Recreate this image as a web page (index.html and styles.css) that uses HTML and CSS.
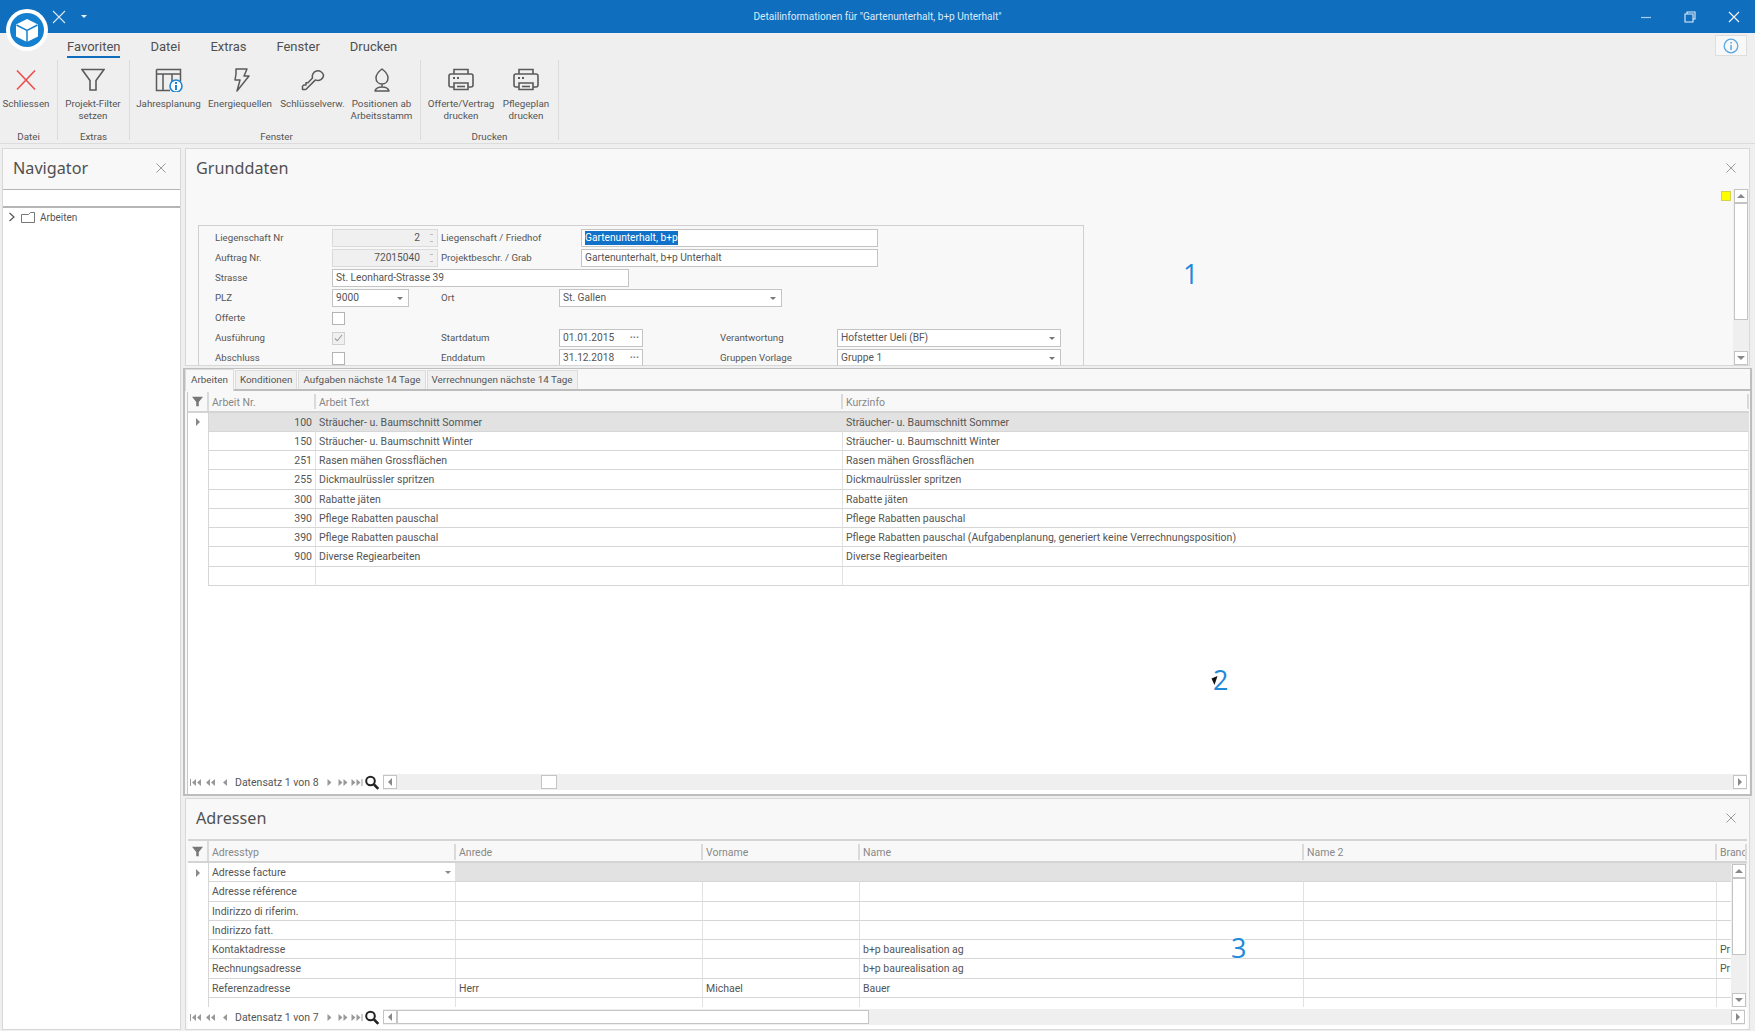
FILE: index.html
```html
<!DOCTYPE html>
<html lang="de">
<head>
  <meta charset="UTF-8" />
  <title>Detailinformationen</title>
  <link rel="stylesheet" href="styles.css">
</head>
<body>
  <svg class="defs" width="0" height="0">
    <symbol id="i-first" viewBox="0 0 11 7"><rect x="0" y="0" width="1" height="7"/><path d="M6 0v7L2 3.500zM11 0v7L7 3.500z"/></symbol>
    <symbol id="i-prevp" viewBox="0 0 11 7"><path d="M5 0v7L1 3.500zM10 0v7L6 3.500z"/></symbol>
    <symbol id="i-prev" viewBox="0 0 11 7"><path d="M7 0v7L3 3.500z"/></symbol>
    <symbol id="i-next" viewBox="0 0 11 7"><path d="M4 0v7l4-3.500z"/></symbol>
    <symbol id="i-nextp" viewBox="0 0 11 7"><path d="M1 0v7l4-3.500zM6 0v7l4-3.500z"/></symbol>
    <symbol id="i-last" viewBox="0 0 11 7"><path d="M0 0v7l4-3.500zM5 0v7l4-3.500z"/><rect x="10" y="0" width="1" height="7"/></symbol>
    <symbol id="i-close" viewBox="0 0 10 10"><path d="M.5.5l9 9M9.500.5l-9 9" fill="none" stroke="currentColor"/></symbol>
    <symbol id="i-printer" viewBox="0 0 26 24"><g fill="none" stroke="#5a5a5a" stroke-width="1.600"><path d="M6 6V1.500h14V6"/><rect x="1" y="6" width="24" height="13" rx="2"/><path d="M6 15h14v6.500H6z" fill="#efefef"/><path d="M9 18.500h8"/></g><path d="M5 9h2v2H5zM9 9h2v2H9z" fill="#5a5a5a"/></symbol>
    <symbol id="i-funnel" viewBox="0 0 13 13"><path d="M0 1h13L8 7v5H5V7z"/></symbol>
    <symbol id="i-search" viewBox="0 0 15 15"><circle cx="6" cy="6" r="4.300" fill="none" stroke="#222" stroke-width="2"/><path d="M9.500 9.500l4.300 4.300" stroke="#222" stroke-width="2.600"/></symbol>
  </svg>

  <div class="app">
    <!-- Titelleiste -->
    <header class="titlebar">
      <div class="qat">
        <svg class="qat-x" width="14" height="14" viewBox="0 0 14 14"><path d="M1 1l12 12M13 1L1 13" fill="none" stroke="#dbe9f6" stroke-width="1.100"/></svg>
        <span class="qat-arrow"></span>
      </div>
      <div class="title">Detailinformationen für "Gartenunterhalt, b+p Unterhalt"</div>
      <div class="winbtns">
        <svg width="12" height="12" viewBox="0 0 12 12"><path d="M1 6.500h10" stroke="#a9cdea" stroke-width="1.200"/></svg>
        <svg width="12" height="12" viewBox="0 0 12 12"><path d="M3 3V1h8v7H9M1 3h8v8H1z" fill="none" stroke="#e4eff9" stroke-width="1.100"/></svg>
        <svg width="12" height="12" viewBox="0 0 12 12"><path d="M1 1l10 10M11 1L1 11" fill="none" stroke="#f0f6fb" stroke-width="1.200"/></svg>
      </div>
    </header>

    <div class="logo">
      <svg width="34" height="34" viewBox="0 0 34 34">
        <circle cx="17" cy="17" r="17" fill="#1480cf"/>
        <path d="M17 6l11 5.500v12L17 29 6 23.500v-12z" fill="#fff"/>
        <path d="M6.500 12L17 17.300 27.500 12M17 17.300V29" fill="none" stroke="#1480cf" stroke-width="1.500"/>
      </svg>
    </div>

    <!-- Ribbon -->
    <section class="ribbon">
      <nav class="ribbon-tabs">
        <span class="ribbon-tab active">Favoriten</span>
        <span class="ribbon-tab">Datei</span>
        <span class="ribbon-tab">Extras</span>
        <span class="ribbon-tab">Fenster</span>
        <span class="ribbon-tab">Drucken</span>
        <button class="info-btn">
          <svg width="16" height="16" viewBox="0 0 16 16"><circle cx="8" cy="8" r="6.800" fill="none" stroke="#5aa9e2" stroke-width="1.300"/><rect x="7.300" y="7" width="1.500" height="5" fill="#5aa9e2"/><rect x="7.300" y="4" width="1.500" height="1.600" fill="#5aa9e2"/></svg>
        </button>
      </nav>
      <div class="ribbon-groups">
        <div class="rgroup g-datei">
          <div class="rbuttons">
            <div class="rbtn w-52">
              <svg class="ricon" width="24" height="24" viewBox="0 0 24 24"><path d="M3 2.500l18 19M21 2.500l-18 19" fill="none" stroke="#ee4d4d" stroke-width="1.600"/></svg>
              <span>Schliessen</span>
            </div>
          </div>
          <div class="rlabel">Datei</div>
        </div>
        <div class="rgroup g-extras">
          <div class="rbuttons">
            <div class="rbtn w-70">
              <svg class="ricon" width="24" height="24" viewBox="0 0 24 24"><path d="M1 1.500h22l-8 11v9.500H9v-9.500z" fill="none" stroke="#5a5a5a" stroke-width="1.600"/></svg>
              <span>Projekt-Filter<br>setzen</span>
            </div>
          </div>
          <div class="rlabel">Extras</div>
        </div>
        <div class="rgroup g-fenster">
          <div class="rbuttons">
            <div class="rbtn w-71">
              <svg class="ricon" width="28" height="24" viewBox="0 0 28 24"><g fill="none" stroke="#5a5a5a" stroke-width="1.500"><path d="M1.500 1.500h24V13M15 22.500H1.500v-21M1.500 6h24M8 6v16.500M17 6v8"/></g><circle cx="21" cy="18" r="6" fill="#fff" stroke="#1d87d5" stroke-width="1.600"/><path d="M20 17h2v5h-2zM20 14h2v2h-2z" fill="#1d87d5"/></svg>
              <span>Jahresplanung</span>
            </div>
            <div class="rbtn w-72">
              <svg class="ricon" width="24" height="24" viewBox="0 0 24 24"><path d="M8 1h11l-3 7h5L9 23l3-11H7l1-6z" fill="none" stroke="#5a5a5a" stroke-width="1.500" stroke-linejoin="round"/></svg>
              <span>Energiequellen</span>
            </div>
            <div class="rbtn w-73">
              <svg class="ricon" width="26" height="24" viewBox="0 0 26 24"><path d="M23.500 7a5.500 5.500 0 0 1-8 4.900L5.800 21.500H2.500v-3.300l1.300-1.200h2.200v-2.200l2-.1L12.500 10a5.500 5.500 0 1 1 11-3z" fill="none" stroke="#5a5a5a" stroke-width="1.500" stroke-linejoin="round"/></svg>
              <span>Schlüsselverw.</span>
            </div>
            <div class="rbtn w-65">
              <svg class="ricon" width="24" height="24" viewBox="0 0 24 24"><path d="M12 1c-4 3-6 6-6 9 0 3.500 2.500 6 6 6s6-2.500 6-6c0-3-2-6-6-9zM12 16v3M5 23c1-3.500 4-4 7-4s6 .5 7 4z" fill="none" stroke="#5a5a5a" stroke-width="1.500" stroke-linejoin="round"/></svg>
              <span>Positionen ab<br>Arbeitsstamm</span>
            </div>
          </div>
          <div class="rlabel">Fenster</div>
        </div>
        <div class="rgroup g-drucken">
          <div class="rbuttons">
            <div class="rbtn w-80">
              <svg class="ricon" width="26" height="24"><use href="#i-printer"/></svg>
              <span>Offerte/Vertrag<br>drucken</span>
            </div>
            <div class="rbtn w-50">
              <svg class="ricon" width="26" height="24"><use href="#i-printer"/></svg>
              <span>Pflegeplan<br>drucken</span>
            </div>
          </div>
          <div class="rlabel">Drucken</div>
        </div>
      </div>
    </section>

    <div class="workspace">
      <!-- Navigator -->
      <aside class="navigator">
        <div class="panel-head">
          <h2>Navigator</h2>
          <svg class="panel-close" width="10" height="10"><use href="#i-close"/></svg>
        </div>
        <div class="nav-search"></div>
        <div class="tree-row">
          <svg width="8" height="10" viewBox="0 0 8 10"><path d="M1.500 1L6 5 1.500 9" fill="none" stroke="#555" stroke-width="1.200"/></svg>
          <svg width="14" height="11" viewBox="0 0 14 11"><path d="M.5 2.500h7l2-2h4v10H.5z" fill="none" stroke="#777"/></svg>
          <span>Arbeiten</span>
        </div>
      </aside>

      <main class="main">
        <!-- Grunddaten -->
        <section class="panel grunddaten">
          <div class="panel-head">
            <h2>Grunddaten</h2>
            <svg class="panel-close" width="10" height="10"><use href="#i-close"/></svg>
          </div>
          <span class="yellow-mark"></span>
          <div class="panel-body">
            <div class="form-scroll">
              <div class="form-frame">
                <div class="form-row">
                  <label>Liegenschaft Nr</label>
                  <div class="field spin"><span>2</span><i class="spin-arrows"></i></div>
                  <label>Liegenschaft / Friedhof</label>
                  <div class="field name-field"><span class="selected">Gartenunterhalt, b+p</span></div>
                </div>
                <div class="form-row">
                  <label>Auftrag Nr.</label>
                  <div class="field spin"><span>72015040</span><i class="spin-arrows"></i></div>
                  <label>Projektbeschr. / Grab</label>
                  <div class="field name-field"><span>Gartenunterhalt, b+p Unterhalt</span></div>
                </div>
                <div class="form-row">
                  <label>Strasse</label>
                  <div class="field street"><span>St. Leonhard-Strasse 39</span></div>
                </div>
                <div class="form-row">
                  <label>PLZ</label>
                  <div class="field combo plz"><span>9000</span></div>
                  <label>Ort</label>
                  <div class="field combo city"><span>St. Gallen</span></div>
                </div>
                <div class="form-row">
                  <label>Offerte</label>
                  <span class="check"></span>
                </div>
                <div class="form-row">
                  <label>Ausführung</label>
                  <span class="check checked">
                    <svg width="9" height="8" viewBox="0 0 9 8"><path d="M1 4.500l2.300 2.300L8 1" fill="none" stroke="#999" stroke-width="1.100"/></svg>
                  </span>
                  <label>Startdatum</label>
                  <div class="field date"><span>01.01.2015</span><b>···</b></div>
                  <label>Verantwortung</label>
                  <div class="field combo person"><span>Hofstetter Ueli (BF)</span></div>
                </div>
                <div class="form-row">
                  <label>Abschluss</label>
                  <span class="check"></span>
                  <label>Enddatum</label>
                  <div class="field date"><span>31.12.2018</span><b>···</b></div>
                  <label>Gruppen Vorlage</label>
                  <div class="field combo person"><span>Gruppe 1</span></div>
                </div>
              </div>
            </div>
            <div class="vscroll">
              <div class="sb-btn"><i class="tri up"></i></div>
              <div class="sb-thumb form-thumb"></div>
              <div class="sb-track"></div>
              <div class="sb-btn"><i class="tri down"></i></div>
            </div>
          </div>
        </section>

        <!-- Arbeiten -->
        <section class="panel work">
          <div class="tabstrip">
            <span class="tab active">Arbeiten</span>
            <span class="tab">Konditionen</span>
            <span class="tab">Aufgaben nächste 14 Tage</span>
            <span class="tab">Verrechnungen nächste 14 Tage</span>
          </div>
          <div class="grid work-grid">
            <div class="grow ghead">
              <div class="cell ind"><svg width="11" height="11"><use href="#i-funnel"/></svg></div>
              <div class="cell">Arbeit Nr.</div>
              <div class="cell">Arbeit Text</div>
              <div class="cell">Kurzinfo</div>
            </div>
            <div class="grid-rows">
              <div class="grow current">
                <div class="cell ind"><i class="tri right"></i></div>
                <div class="cell num">100</div>
                <div class="cell">Sträucher- u. Baumschnitt Sommer</div>
                <div class="cell">Sträucher- u. Baumschnitt Sommer</div>
              </div>
              <div class="grow">
                <div class="cell ind"></div>
                <div class="cell num">150</div>
                <div class="cell">Sträucher- u. Baumschnitt Winter</div>
                <div class="cell">Sträucher- u. Baumschnitt Winter</div>
              </div>
              <div class="grow">
                <div class="cell ind"></div>
                <div class="cell num">251</div>
                <div class="cell">Rasen mähen Grossflächen</div>
                <div class="cell">Rasen mähen Grossflächen</div>
              </div>
              <div class="grow">
                <div class="cell ind"></div>
                <div class="cell num">255</div>
                <div class="cell">Dickmaulrüssler spritzen</div>
                <div class="cell">Dickmaulrüssler spritzen</div>
              </div>
              <div class="grow">
                <div class="cell ind"></div>
                <div class="cell num">300</div>
                <div class="cell">Rabatte jäten</div>
                <div class="cell">Rabatte jäten</div>
              </div>
              <div class="grow">
                <div class="cell ind"></div>
                <div class="cell num">390</div>
                <div class="cell">Pflege Rabatten pauschal</div>
                <div class="cell">Pflege Rabatten pauschal</div>
              </div>
              <div class="grow">
                <div class="cell ind"></div>
                <div class="cell num">390</div>
                <div class="cell">Pflege Rabatten pauschal</div>
                <div class="cell">Pflege Rabatten pauschal (Aufgabenplanung, generiert keine Verrechnungsposition)</div>
              </div>
              <div class="grow">
                <div class="cell ind"></div>
                <div class="cell num">900</div>
                <div class="cell">Diverse Regiearbeiten</div>
                <div class="cell">Diverse Regiearbeiten</div>
              </div>
              <div class="grow">
                <div class="cell ind"></div>
                <div class="cell num"></div>
                <div class="cell"></div>
                <div class="cell"></div>
              </div>
            </div>
            <div class="pager">
              <svg class="pg"><use href="#i-first"/></svg>
              <svg class="pg"><use href="#i-prevp"/></svg>
              <svg class="pg"><use href="#i-prev"/></svg>
              <span class="pg-text">Datensatz 1 von 8</span>
              <svg class="pg nx"><use href="#i-next"/></svg>
              <svg class="pg nx"><use href="#i-nextp"/></svg>
              <svg class="pg nx"><use href="#i-last"/></svg>
              <svg class="pg-search"><use href="#i-search"/></svg>
              <div class="hscroll">
                <div class="sb-btn"><i class="tri left"></i></div>
                <div class="sb-track work-before"></div>
                <div class="sb-thumb work-thumb"></div>
                <div class="sb-track grow-track"></div>
                <div class="sb-btn"><i class="tri right"></i></div>
              </div>
            </div>
          </div>
        </section>

        <!-- Adressen -->
        <section class="panel addr">
          <div class="panel-head">
            <h2>Adressen</h2>
            <svg class="panel-close" width="10" height="10"><use href="#i-close"/></svg>
          </div>
          <div class="grid addr-grid">
            <div class="grow ghead">
              <div class="cell ind"><svg width="11" height="11"><use href="#i-funnel"/></svg></div>
              <div class="cell">Adresstyp</div>
              <div class="cell">Anrede</div>
              <div class="cell">Vorname</div>
              <div class="cell">Name</div>
              <div class="cell">Name 2</div>
              <div class="cell">Branche</div>
            </div>
            <div class="grid-rows">
              <div class="grow current">
                <div class="cell ind"><i class="tri right"></i></div>
                <div class="cell editing">Adresse facture<i class="tri down"></i></div>
                <div class="cell"></div><div class="cell"></div><div class="cell"></div><div class="cell"></div><div class="cell"></div>
              </div>
              <div class="grow">
                <div class="cell ind"></div>
                <div class="cell">Adresse référence</div>
                <div class="cell"></div><div class="cell"></div><div class="cell"></div><div class="cell"></div><div class="cell"></div>
              </div>
              <div class="grow">
                <div class="cell ind"></div>
                <div class="cell">Indirizzo di riferim.</div>
                <div class="cell"></div><div class="cell"></div><div class="cell"></div><div class="cell"></div><div class="cell"></div>
              </div>
              <div class="grow">
                <div class="cell ind"></div>
                <div class="cell">Indirizzo fatt.</div>
                <div class="cell"></div><div class="cell"></div><div class="cell"></div><div class="cell"></div><div class="cell"></div>
              </div>
              <div class="grow">
                <div class="cell ind"></div>
                <div class="cell">Kontaktadresse</div>
                <div class="cell"></div><div class="cell"></div>
                <div class="cell">b+p baurealisation ag</div>
                <div class="cell"></div>
                <div class="cell">Pr</div>
              </div>
              <div class="grow">
                <div class="cell ind"></div>
                <div class="cell">Rechnungsadresse</div>
                <div class="cell"></div><div class="cell"></div>
                <div class="cell">b+p baurealisation ag</div>
                <div class="cell"></div>
                <div class="cell">Pr</div>
              </div>
              <div class="grow">
                <div class="cell ind"></div>
                <div class="cell">Referenzadresse</div>
                <div class="cell">Herr</div>
                <div class="cell">Michael</div>
                <div class="cell">Bauer</div>
                <div class="cell"></div><div class="cell"></div>
              </div>
              <div class="grow">
                <div class="cell ind"></div>
                <div class="cell"></div><div class="cell"></div><div class="cell"></div><div class="cell"></div><div class="cell"></div><div class="cell"></div>
              </div>
            </div>
            <div class="vscroll addr-vscroll">
              <div class="sb-btn"><i class="tri up"></i></div>
              <div class="sb-thumb addr-thumb"></div>
              <div class="sb-track"></div>
              <div class="sb-btn"><i class="tri down"></i></div>
            </div>
            <div class="pager">
              <svg class="pg"><use href="#i-first"/></svg>
              <svg class="pg"><use href="#i-prevp"/></svg>
              <svg class="pg"><use href="#i-prev"/></svg>
              <span class="pg-text">Datensatz 1 von 7</span>
              <svg class="pg nx"><use href="#i-next"/></svg>
              <svg class="pg nx"><use href="#i-nextp"/></svg>
              <svg class="pg nx"><use href="#i-last"/></svg>
              <svg class="pg-search"><use href="#i-search"/></svg>
              <div class="hscroll">
                <div class="sb-btn"><i class="tri left"></i></div>
                <div class="sb-thumb addr-hthumb"></div>
                <div class="sb-track grow-track"></div>
                <div class="sb-btn"><i class="tri right"></i></div>
              </div>
            </div>
          </div>
        </section>
      </main>
    </div>

    <!-- Markierungen -->
    <span class="marker m1">1</span>
    <span class="marker m2">2</span>
    <span class="marker m3">3</span>
    <svg class="cursor" width="7" height="11" viewBox="0 0 7 11"><path d="M6.500 1L.5 3.500l3 6.500 1-3z" fill="#111"/></svg>
  </div>
</body>
</html>
```

FILE: styles.css
```css
* {
  box-sizing: border-box;
}

html, body {
  margin: 0;
  padding: 0;
  height: 100%;
  overflow: hidden;
  background: #efefef;
  font-family: Roboto, sans-serif;
  font-size: 10.5px;
  color: #555;
}

.defs {
  position: absolute;
}

.app {
  position: relative;
  width: 1755px;
  height: 1031px;
  display: flex;
  flex-direction: column;
  overflow: hidden;
}

/* title bar */
.titlebar {
  flex: 0 0 33px;
  background: #0f6ebe;
  display: grid;
  grid-template-columns: 1fr auto 1fr;
  align-items: center;
}

.qat {
  display: flex;
  align-items: center;
  padding-left: 52px;
  gap: 15px;
}

.qat-arrow {
  width: 0;
  height: 0;
  border-left: 3px solid transparent;
  border-right: 3px solid transparent;
  border-top: 3px solid #eaf3fb;
}

.title {
  color: #dcebf8;
  font-size: 10.1px;
}

.winbtns {
  display: flex;
  justify-content: flex-end;
  gap: 32px;
  padding-right: 15px;
}

.logo {
  position: absolute;
  left: 6px;
  top: 9px;
  width: 42px;
  height: 42px;
  border-radius: 50%;
  background: #fff;
  display: flex;
  align-items: center;
  justify-content: center;
}

/* ribbon */
.ribbon {
  flex: 0 0 111px;
  background: #efefef;
  border-bottom: 1px solid #dcdcdc;
  display: flex;
  flex-direction: column;
}

.ribbon-tabs {
  flex: 0 0 27px;
  display: flex;
  align-items: flex-start;
  gap: 30px;
  padding-left: 67px;
  padding-right: 8px;
}

.ribbon-tab {
  font-size: 13px;
  line-height: 17px;
  margin-top: 5px;
  padding-bottom: 1px;
  color: #505050;
  border-bottom: 2px solid transparent;
}

.ribbon-tab.active {
  border-bottom-color: #0f6ebe;
}

.info-btn {
  margin-left: auto;
  margin-top: 2px;
  width: 32px;
  height: 21px;
  padding: 0;
  background: #f8f8f8;
  border: 1px solid #dedede;
  display: flex;
  align-items: center;
  justify-content: center;
}

.ribbon-groups {
  flex: 0 0 80px;
  display: flex;
  font-size: 9.8px;
}

.rgroup {
  display: flex;
  flex-direction: column;
  border-right: 1px solid #dcdcdc;
}

.g-datei { width: 58px; }
.g-extras { width: 72px; }
.g-fenster { width: 291px; padding-left: 3px; }
.g-drucken { width: 138px; }

.rbuttons {
  flex: 1;
  display: flex;
}

.rbtn {
  display: flex;
  flex-direction: column;
  align-items: center;
  text-align: center;
  line-height: 12px;
  white-space: nowrap;
}

.w-52 { width: 52px; }
.w-70 { width: 70px; }
.w-71 { width: 71px; }
.w-72 { width: 72px; }
.w-73 { width: 73px; }
.w-65 { width: 65px; }
.w-80 { width: 80px; }
.w-50 { width: 50px; }

.ricon {
  height: 24px;
  margin-top: 8px;
  margin-bottom: 6px;
}

.rlabel {
  text-align: center;
  line-height: 12px;
  margin-bottom: -3px;
}

/* workspace */
.workspace {
  flex: 1;
  min-height: 0;
  display: flex;
  gap: 4px;
  padding: 4px 5px 1px 2px;
}

.navigator {
  flex: 0 0 179px;
  background: #fff;
  border: 1px solid #d8d8d8;
  display: flex;
  flex-direction: column;
}

.panel-head {
  flex: 0 0 40px;
  background: #f8f8f8;
  display: flex;
  align-items: center;
  justify-content: space-between;
  padding: 0 14px 2px 10px;
}

.panel-head h2 {
  margin: 0;
  font-family: "Noto Sans", sans-serif;
  font-size: 16.2px;
  font-weight: 400;
  color: #505050;
}

.panel-close {
  color: #9a9a9a;
}

.nav-search {
  height: 19px;
  background: #fff;
  border-top: 1px solid #b5b5b5;
  border-bottom: 2px solid #b5b5b5;
}

.tree-row {
  display: flex;
  align-items: center;
  gap: 5px;
  padding: 0 0 2px 5px;
  height: 20px;
  font-size: 10px;
}

.main {
  flex: 1;
  min-width: 0;
  display: flex;
  flex-direction: column;
  gap: 2px;
}

.panel {
  position: relative;
  min-height: 0;
  overflow: hidden;
  background: #f8f8f8;
  border: 1px solid #d8d8d8;
  display: flex;
  flex-direction: column;
}

/* Grunddaten */
.grunddaten {
  flex: 0 0 218px;
}

.grunddaten .panel-head {
  padding-right: 13px;
}

.yellow-mark {
  position: absolute;
  top: 42px;
  right: 18px;
  width: 10px;
  height: 10px;
  background: #fdfd00;
  border: 1px solid #d2d24c;
}

.panel-body {
  flex: 1;
  min-height: 0;
  display: flex;
}

.form-scroll {
  flex: 1;
  min-height: 0;
  overflow: hidden;
  padding: 36px 0 0 12px;
}

.form-frame {
  width: 886px;
  height: 200px;
  border: 1px solid #cfcfcf;
  padding: 3px 0 0 16px;
  display: flex;
  flex-direction: column;
  gap: 2px;
}

.form-row {
  flex: 0 0 18px;
  display: grid;
  grid-template-columns: 117px 109px 118px 161px 117px 224px;
  height: 18px;
  align-items: center;
}

.form-row label {
  font-size: 9.7px;
  line-height: 16px;
}

.field {
  height: 18px;
  background: #fff;
  border: 1px solid #c4c4c4;
  font-size: 10.2px;
  line-height: 15px;
  padding: 0 3px;
  white-space: nowrap;
  overflow: hidden;
  position: relative;
}

.spin {
  width: 106px;
  background: #f0f0f0;
  border-color: #dadada;
  text-align: right;
  padding-right: 17px;
}

.spin-arrows {
  position: absolute;
  right: 3px;
  top: 3px;
  width: 6px;
  height: 10px;
  background:
    linear-gradient(#bbb, #bbb) center 1px / 3px 1px no-repeat,
    linear-gradient(#bbb, #bbb) center 8px / 3px 1px no-repeat;
}

.name-field {
  grid-column: 4 / 7;
  margin-left: 22px;
  width: 297px;
}

.selected {
  background: #1170c8;
  color: #fff;
  display: inline-block;
  line-height: 14px;
}

.street {
  grid-column: 2 / 5;
  width: 297px;
}

.combo::after {
  content: "";
  position: absolute;
  right: 5px;
  top: 7px;
  border-left: 3px solid transparent;
  border-right: 3px solid transparent;
  border-top: 3px solid #777;
}

.plz { width: 77px; }
.city { grid-column: 4 / 7; width: 223px; }
.date { width: 84px; }
.person { width: 224px; }

.date b {
  position: absolute;
  right: 3px;
  top: 0;
  font-weight: 700;
  color: #777;
}

.check {
  width: 13px;
  height: 13px;
  background: #fff;
  border: 1px solid #b4b4b4;
  display: flex;
  align-items: center;
  justify-content: center;
}

.check.checked {
  background: #f0f0f0;
  border-color: #d0d0d0;
}

/* scrollbars */
.vscroll {
  flex: 0 0 16px;
  display: flex;
  flex-direction: column;
  padding: 0 1px;
  background: #efefef;
}

.sb-btn {
  flex: 0 0 auto;
  width: 14px;
  height: 14px;
  background: #fff;
  border: 1px solid #c4c4c4;
  display: flex;
  align-items: center;
  justify-content: center;
}

.sb-thumb {
  background: #fff;
  border: 1px solid #c4c4c4;
}

.sb-track {
  flex: 1;
  background: #efefef;
}

.form-thumb {
  flex: 0 0 117px;
}

.tri {
  display: block;
  width: 0;
  height: 0;
}

.tri.up {
  border-left: 4px solid transparent;
  border-right: 4px solid transparent;
  border-bottom: 4px solid #888;
}

.tri.down {
  border-left: 4px solid transparent;
  border-right: 4px solid transparent;
  border-top: 4px solid #888;
}

.tri.left {
  border-top: 4px solid transparent;
  border-bottom: 4px solid transparent;
  border-right: 4px solid #888;
}

.tri.right {
  border-top: 4px solid transparent;
  border-bottom: 4px solid transparent;
  border-left: 4px solid #888;
}

/* Arbeiten */
.work {
  flex: 0 0 428px;
  margin: 0 -2px;
  border: 2px solid #bdbdbd;
  border-top: 1px solid #bdbdbd;
}

.tabstrip {
  flex: 0 0 22px;
  display: flex;
  align-items: flex-end;
  border-bottom: 2px solid #bdbdbd;
  font-size: 9.9px;
}

.tab {
  height: 19px;
  line-height: 17px;
  padding: 0 4px;
  margin-right: 1px;
  background: #f0f0f0;
  border: 1px solid #dcdcdc;
  border-bottom: 0;
  white-space: nowrap;
}

.tab.active {
  position: relative;
  height: 22px;
  margin-bottom: -2px;
  padding: 0 5px;
  background: #f8f8f8;
  line-height: 20px;
}

.grid {
  flex: 1;
  min-height: 0;
  background: #fff;
  display: flex;
  flex-direction: column;
  position: relative;
}

.grid-rows {
  flex: 1;
  min-height: 0;
  overflow: hidden;
}

.grow {
  display: grid;
  height: 19.25px;
}

.work-grid .grow {
  grid-template-columns: 21px 107px 527px 1fr;
}

.addr-grid .grow {
  grid-template-columns: 21px 247px 247px 157px 444px 413px 1fr;
}

.work-grid {
  margin: 1px 1px 0 2px;
  border-left: 1px solid #c8c8c8;
}

.cell {
  border-right: 1px solid #e2e2e2;
  border-bottom: 1px solid #d6d6d6;
  padding: 0 3px;
  line-height: 20px;
  white-space: nowrap;
  overflow: hidden;
  position: relative;
}

.cell.num {
  text-align: right;
}

.cell.ind {
  border-bottom: 0;
  border-right: 1px solid #d6d6d6;
  background: #fff;
  display: flex;
  align-items: center;
  justify-content: center;
  padding: 0;
}

.ghead {
  background: #f8f8f8;
  border-bottom: 2px solid #d4d4d4;
  color: #888;
}

.work-grid .ghead {
  flex: 0 0 20.5px;
  height: 20.5px;
}

.addr-grid .ghead {
  flex: 0 0 22px;
  height: 22px;
}

.ghead .cell {
  border-bottom: 0;
  border-right: 2px solid #dadada;
  margin: 2px 0;
  line-height: 17px;
}

.addr-grid .ghead .cell {
  margin: 3px 0 1px;
}

.ghead .cell.ind,
.addr-grid .ghead .cell.ind {
  background: #f8f8f8;
  margin: 0;
  fill: #777;
}

.current .cell {
  background: #e2e2e2;
}

.current .cell.ind,
.current .cell.editing {
  background: #fff;
}

.editing .tri {
  position: absolute;
  right: 4px;
  top: 8px;
  border-left-width: 3px;
  border-right-width: 3px;
  border-top-width: 3px;
}

.pager {
  flex: 0 0 22px;
  display: flex;
  align-items: center;
  padding: 0 2px 2px 0;
  background: #fff;
}

.pg {
  flex: 0 0 15px;
  width: 15px;
  height: 7px;
  fill: #999;
}

.pg.nx {
  flex-basis: 14px;
  width: 14px;
}

.pg-text {
  flex: 0 0 87px;
  margin-left: 2px;
  white-space: nowrap;
}

.pg-search {
  flex: 0 0 16px;
  width: 15px;
  height: 15px;
}

.hscroll {
  flex: 1;
  margin-left: 3px;
  height: 16px;
  display: flex;
  align-items: center;
  background: #efefef;
}

.work-before {
  flex: 0 0 144px;
}

.work-thumb {
  flex: 0 0 16px;
  height: 14px;
}

.addr-hthumb {
  flex: 0 0 472px;
  height: 14px;
}

.grow-track {
  flex: 1;
  height: 14px;
}

/* Adressen */
.addr {
  flex: 1;
}

.addr .panel-head {
  padding-right: 13px;
}

.addr-grid {
  margin: 0 2px;
  border-top: 2px solid #d4d4d4;
}

.addr-vscroll {
  position: absolute;
  right: 0;
  top: 23px;
  bottom: 22px;
  width: 16px;
}

.addr-thumb {
  flex: 0 0 77px;
}

/* numbered markers over the screenshot */
.marker {
  position: absolute;
  color: #1f8ad8;
  font-size: 27px;
  line-height: 30px;
  font-family: "Open Sans", sans-serif;
  text-shadow: 0 0 3px #fff, 0 0 3px #fff;
}

.m1 { left: 1183px; top: 259px; }
.m2 { left: 1213px; top: 665px; }
.m3 { left: 1231px; top: 933px; }

.cursor {
  position: absolute;
  left: 1211px;
  top: 675px;
}
```
